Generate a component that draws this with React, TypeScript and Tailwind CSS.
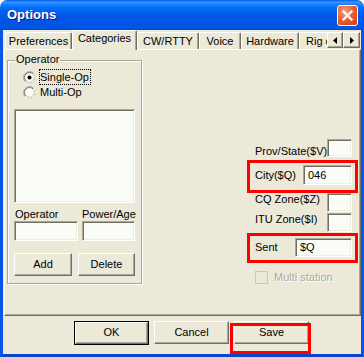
import React from "react";

const raised =
  "border border-t-white border-l-white border-r-[#716F64] border-b-[#716F64] shadow-[inset_-1px_-1px_0_#ACA899] bg-[#ECE9D8]";
const sunken =
  "border border-t-[#ACA899] border-l-[#ACA899] border-r-white border-b-white shadow-[inset_1px_1px_0_#716F64,inset_-1px_-1px_0_#F1EFE2] bg-[#FAFCF8]";

function Radio({ checked }: { checked?: boolean }) {
  return (
    <svg width="13" height="13" viewBox="0 0 13 13" className="shrink-0">
      <circle cx="6.5" cy="6.5" r="6" fill="#FAFCF8" stroke="#ACA899" strokeWidth="1" />
      <path d="M10.74 2.26 A6 6 0 0 1 2.26 10.74" fill="none" stroke="#FFFFFF" strokeWidth="1" />
      <circle cx="6.5" cy="6.5" r="5" fill="none" stroke="#716F64" strokeWidth="1" />
      <path d="M10.04 2.96 A5 5 0 0 1 2.96 10.04" fill="none" stroke="#F1EFE2" strokeWidth="1" />
      {checked && <circle cx="6.5" cy="6.5" r="2" fill="#000" />}
    </svg>
  );
}

function Tab({ w, label, left }: { w: string; label: string; left?: boolean }) {
  return (
    <div
      className={`${w} mt-[2px] h-[17px] shrink-0 flex items-center ${
        left ? "justify-start pl-[6px]" : "justify-center"
      } border-l border-t border-r border-l-white border-t-white border-r-[#716F64] rounded-t-[2px] shadow-[inset_-1px_0_0_#ACA899] whitespace-nowrap overflow-hidden`}
    >
      {label}
    </div>
  );
}

function Btn({ w, label, h = "h-[23px]" }: { w: string; label: string; h?: string }) {
  return <div className={`${raised} ${w} ${h} shrink-0 flex items-center justify-center`}>{label}</div>;
}

export default function App() {
  return (
    <div className="relative w-[364px] h-[357px] bg-white font-['Liberation_Sans',Arial,sans-serif] text-[11px] leading-[13px] text-black select-none">
      <div className="flex flex-col w-full h-full">
        {/* Title bar */}
        <div className="h-[30px] shrink-0 rounded-t-[7px] bg-[linear-gradient(to_bottom,#0058EE_0%,#3A93FF_7%,#288EFF_10%,#127DFF_16%,#036FFC_24%,#0262EE_38%,#0057E5_56%,#0054E3_80%,#0055EB_92%,#0049D0_100%)] flex items-center justify-between pl-[7px] pr-[6px]">
          <span className="text-white font-bold text-[13px] leading-[16px] [text-shadow:1px_1px_0_#0A1883]">Options</span>
          <div className="w-[21px] h-[21px] rounded-[3px] border border-white bg-[radial-gradient(circle_at_35%_30%,#F4A080_0%,#E2592E_55%,#C5401A_100%)] flex items-center justify-center">
            <svg width="13" height="13" viewBox="0 0 13 13">
              <path d="M2.5 2.5 L10.5 10.5 M10.5 2.5 L2.5 10.5" stroke="#FFFFFF" strokeWidth="2.2" strokeLinecap="square" />
            </svg>
          </div>
        </div>

        {/* Client */}
        <div className="flex-1 flex flex-col bg-[#ECE9D8] border-x-[3px] border-b-[3px] border-x-[#0A55E8] border-b-[#0846CC]">
          {/* Tab strip */}
          <div className="relative z-10 h-[20px] shrink-0 flex items-start pl-[2px] overflow-hidden">
            <Tab w="w-[67px]" label="Preferences" />
            <div className="w-[65px] h-[20px] shrink-0 flex items-center justify-center pb-[4px] border-l border-t border-r border-l-white border-t-white border-r-[#716F64] rounded-t-[2px] shadow-[inset_-1px_0_0_#ACA899] bg-[#ECE9D8]">
              Categories
            </div>
            <Tab w="w-[62px]" label="CW/RTTY" />
            <Tab w="w-[42px]" label="Voice" />
            <Tab w="w-[58px]" label="Hardware" />
            <Tab w="w-[70px]" label="Rig control" left />
            <div className="absolute right-[1px] top-[2px] flex">
              <div className={`${raised} w-[16px] h-[16px] flex items-center justify-center`}>
                <svg width="4" height="7" viewBox="0 0 4 7">
                  <path d="M4 0 L0 3.5 L4 7 Z" fill="#000" />
                </svg>
              </div>
              <div className={`${raised} w-[17px] h-[16px] flex items-center justify-center`}>
                <svg width="4" height="7" viewBox="0 0 4 7">
                  <path d="M0 0 L4 3.5 L0 7 Z" fill="#000" />
                </svg>
              </div>
            </div>
          </div>

          {/* Panel */}
          <div className="-mt-[1px] ml-[1px] h-[267px] shrink-0 flex pl-[2px] border border-t-white border-l-white border-r-[#716F64] border-b-[#716F64] shadow-[inset_-1px_-1px_0_#ACA899]">
            {/* Operator group */}
            <div className="relative mt-[10px] w-[135px] h-[224px] shrink-0 flex flex-col border border-[#ACA899] shadow-[1px_1px_0_#fff,inset_1px_1px_0_#fff]">
              <span className="absolute -top-[8px] left-[7px] px-[1px] bg-[#ECE9D8]">Operator</span>
              <div className="mt-[8px] h-[16px] flex items-center pl-[15px]">
                <Radio checked />
                <span className="ml-[3px] border border-dotted border-black h-[16px] px-[0px] flex items-center pr-[1px]">Single-Op</span>
              </div>
              <div className="h-[15px] flex items-center pl-[15px]">
                <Radio />
                <span className="ml-[4px]">Multi-Op</span>
              </div>
              <div className={`${sunken} mt-[9px] ml-[6px] w-[121px] h-[94px]`} />
              <div className="mt-[5px] h-[13px] flex">
                <span className="ml-[7px] w-[67px]">Operator</span>
                <span>Power/Age</span>
              </div>
              <div className="h-[20px] flex ml-[6px]">
                <div className={`${sunken} w-[64px] h-[20px]`} />
                <div className={`${sunken} ml-[4px] w-[53px] h-[20px]`} />
              </div>
              <div className="mt-[12px] flex ml-[6px]">
                <Btn w="w-[58px]" label="Add" />
                <div className="w-[6px]" />
                <Btn w="w-[57px]" label="Delete" />
              </div>
            </div>

            {/* Right column */}
            <div className="ml-[113px] w-[97px] shrink-0 flex flex-col">
              <div className="mt-[89px] h-[19px] flex justify-between">
                <span className="self-end">Prov/State($V)</span>
                <div className={`${sunken} w-[25px] h-[18px]`} />
              </div>
              <div className="mt-[7px] h-[20px] flex items-center justify-between">
                <span>City($Q)</span>
                <div className={`${sunken} w-[49px] h-[20px] flex items-center pl-[4px]`}>046</div>
              </div>
              <div className="mt-[8px] h-[19px] flex items-start justify-between">
                <span className="mt-[0px]">CQ Zone($Z)</span>
                <div className={`${sunken} w-[25px] h-[19px]`} />
              </div>
              <div className="mt-[1px] h-[19px] flex items-start justify-between">
                <span>ITU Zone($I)</span>
                <div className={`${sunken} w-[25px] h-[19px]`} />
              </div>
              <div className="mt-[6px] h-[19px] flex items-center justify-between">
                <span>Sent</span>
                <div className={`${sunken} w-[57px] h-[19px] flex items-center pl-[4px]`}>$Q</div>
              </div>
              <div className="mt-[14px] h-[13px] flex items-center">
                <div className="w-[13px] h-[13px] shrink-0 border border-[#C9C7BA] bg-[#ECE9D8]" />
                <span className="ml-[6px] text-[#ACA899] [text-shadow:1px_1px_0_#fff]">Multi station</span>
              </div>
            </div>
          </div>

          {/* Footer */}
          <div className="flex-1 flex items-center pb-[5px] pl-[71px]">
            <div className="w-[75px] h-[24px] border border-black flex">
              <div className={`${raised} flex-1 flex items-center justify-center`}>OK</div>
            </div>
            <div className="ml-[5px]">
              <Btn w="w-[75px]" label="Cancel" />
            </div>
            <div className="ml-[5px]">
              <Btn w="w-[75px]" label="Save" />
            </div>
          </div>
        </div>
      </div>

      {/* Red annotation boxes */}
      <div className="absolute left-[247px] top-[160px] w-[111px] h-[33px] border-[3px] border-[#FF0000]" />
      <div className="absolute left-[247px] top-[233px] w-[111px] h-[30px] border-[3px] border-[#FF0000]" />
      <div className="absolute left-[230px] top-[323px] w-[81px] h-[31px] border-[3px] border-[#FF0000]" />
    </div>
  );
}
